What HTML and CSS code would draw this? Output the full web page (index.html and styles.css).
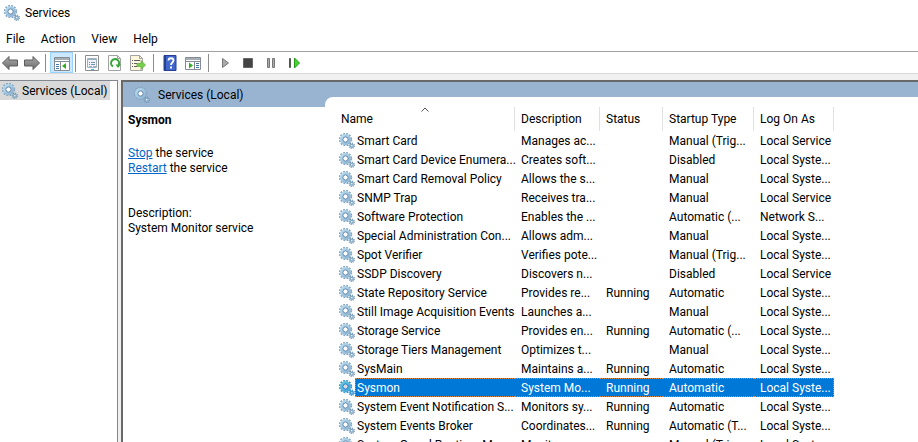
FILE: index.html
```html
<!DOCTYPE html>
<html lang="en">
<head>
<meta charset="utf-8">
<title>Services</title>
<link rel="stylesheet" href="styles.css">
</head>
<body>
<svg class="defs" aria-hidden="true">
  <defs>
    <linearGradient id="metal" x1="0" y1="0" x2="1" y2="1"><stop offset="0" stop-color="#b5daee"/><stop offset="1" stop-color="#8fb4d0"/></linearGradient>
    <linearGradient id="grey" x1="0" y1="0" x2="0" y2="1"><stop offset="0" stop-color="#a8a8a8"/><stop offset="1" stop-color="#6e6e6e"/></linearGradient>
  </defs>
  <symbol id="gear" viewBox="0 0 16 16">
    <circle cx="6.500" cy="6.500" r="5.800" fill="none" stroke="#83a6c3" stroke-width="1.800" stroke-dasharray="1.790 1.247"/>
    <circle cx="6.500" cy="6.500" r="4" fill="none" stroke="url(#metal)" stroke-width="3"/>
    <circle cx="6.500" cy="6.500" r="2.600" fill="#fff" stroke="#6487ae" stroke-width="1"/>
    <circle cx="12.800" cy="12.800" r="2.600" fill="none" stroke="#6b90ae" stroke-width="1.200" stroke-dasharray="1.02 1.02"/>
    <circle cx="12.800" cy="12.800" r="1.500" fill="#fff" stroke="#83a9c4" stroke-width="1.400"/>
  </symbol>
</svg>
<header class="titlebar"><svg class="icon"><use href="#gear"/></svg><h1>Services</h1></header>
<nav class="menu"><button>File</button><button>Action</button><button>View</button><button>Help</button></nav>
<div class="toolbar" role="toolbar">
  <div class="history">
    <button aria-label="Back"><svg class="icon" viewBox="0 0 16 16"><path d="M.5 8 7 1.500V5h8.500v6H7v3.500z" fill="url(#grey)" stroke="#5c5c5c"/></svg></button>
    <button aria-label="Forward"><svg class="icon" viewBox="0 0 16 16"><path d="M15.500 8 9 1.500V5H.5v6H9v3.500z" fill="url(#grey)" stroke="#5c5c5c"/></svg></button>
  </div>
  <span class="rule"></span>
  <button class="pressed" aria-label="Show console tree"><svg class="icon" viewBox="0 0 16 16"><path d="M.5 2.500h15v13H.5z" fill="#fff" stroke="#858b92"/><path d="M1 3h14v2H1z" fill="#a5adb5"/><path d="M1 6.500h14M6.500 7v8" stroke="#858b92"/><path d="M2 9.500h3M2 11.500h3M2 13.500h3" stroke="#4577ad"/><path d="M12 8v6l-4-3z" fill="#2fae20"/></svg></button>
  <span class="rule"></span>
  <button aria-label="Properties"><svg class="icon" viewBox="0 0 16 16"><path d="M1.500.5h13v15h-13z" fill="#fff" stroke="#8c8c8c"/><path d="M3.500 3.500h9v9h-9z" fill="#edf3f8" stroke="#9fb0be"/><path d="M4 4.500h8" stroke="#9cafc0"/><path d="M5 7.500h1M5 9.500h1M7 7.500h4M7 9.500h4" stroke="#7893aa"/><path d="M5 11.500h3M9 11.500h3" stroke="#a6b4c0"/><path d="M7 14.500h3" stroke="#36b5e8"/></svg></button>
  <button aria-label="Refresh"><svg class="icon" viewBox="0 0 16 16"><path d="M1.500.5h9l3 3v12h-12z" fill="#fff" stroke="#a3a3a3"/><path d="M10.500.5v3h3" fill="none" stroke="#a3a3a3"/><path d="M6 11.500A4 4 0 1 1 11.600 10" fill="none" stroke="#33a735" stroke-width="2"/><path d="M8.500 9.500h5.500l-3 3.500z" fill="#33a735"/></svg></button>
  <button aria-label="Export list"><svg class="icon" viewBox="0 0 16 16"><path d="M.5.5h9l3 3v12H.5z" fill="#fff6dc" stroke="#a3a3a3"/><path d="M9.500.5v3h3" fill="none" stroke="#a3a3a3"/><path d="M2 5.500h1M2 8.500h1M2 11.500h1M4 5.500h6M4 8.500h3M4 11.500h3" stroke="#5d6067"/><path d="M7 8.500h4v-3l4.500 4.500-4.500 4.500v-3H7z" fill="#76cf4a" stroke="#5aaf37" stroke-width=".7"/></svg></button>
  <span class="rule"></span>
  <button aria-label="Help"><svg class="icon" viewBox="0 0 16 16"><path d="M2 .5h12v15H2z" fill="#4167cb" stroke="#263f91"/><path d="M2 1h2v14H2z" fill="#24418f"/><path d="M6.500 5.500c0-3 5-3 5 0 0 2-2.500 2-2.500 4.500" fill="none" stroke="#fff" stroke-width="1.800"/><path d="M8 11.500h2v2H8z" fill="#fff"/></svg></button>
  <button aria-label="Show action pane"><svg class="icon" viewBox="0 0 16 16"><path d="M.5 2.500h15v12H.5z" fill="#fff" stroke="#858b92"/><path d="M1 3h14v2H1z" fill="#a5adb5"/><path d="M1 6.500h14M9.500 7v7" stroke="#858b92"/><path d="M11 8.500h3M11 10.500h3M11 12.500h3" stroke="#4577ad"/><path d="M4 7.500v6l4-3z" fill="#2fae20"/></svg></button>
  <span class="rule"></span>
  <button aria-label="Start service"><svg class="icon" viewBox="0 0 16 16"><path d="M5.500 3.500v9l6-4.500z" fill="#aaa" stroke="#777"/></svg></button>
  <button aria-label="Stop service"><svg class="icon" viewBox="0 0 16 16"><path d="M3.500 3.500h9v9h-9z" fill="#444" stroke="#666"/></svg></button>
  <button aria-label="Pause service"><svg class="icon" viewBox="0 0 16 16"><path d="M4.500 3.500h2v9h-2zM9.500 3.500h2v9h-2z" fill="#aaa" stroke="#777"/></svg></button>
  <button aria-label="Restart service"><svg class="icon" viewBox="0 0 16 16"><path d="M3.500 3.500h1v9h-1z" fill="#555" stroke="#555"/><path d="M8.500 3v10l5-5z" fill="#45d332" stroke="#249b19"/></svg></button>
</div>
<main class="workspace">
  <aside class="tree"><button class="node"><svg class="icon"><use href="#gear"/></svg><span>Services (Local)</span></button></aside>
  <section class="console">
    <div class="band"><svg class="icon"><use href="#gear"/></svg><h2>Services (Local)</h2></div>
    <div class="content">
      <div class="details">
        <h3>Sysmon</h3>
        <p><a href="#stop">Stop</a> the service<br><a href="#restart">Restart</a> the service</p>
        <p class="description">Description:<br>System Monitor service</p>
      </div>
      <div class="sheet">
        <table>
          <colgroup><col class="c-name"><col class="c-desc"><col class="c-status"><col class="c-start"><col class="c-logon"></colgroup>
          <thead><tr><th><span>Name</span><svg class="sort" viewBox="0 0 8 5"><path d="M.5 4.500 4 1l3.500 3.500" fill="none" stroke="#555"/></svg></th><th><span>Description</span></th><th><span>Status</span></th><th><span>Startup Type</span></th><th><span>Log On As</span></th></tr></thead>
          <tbody id="rows"></tbody>
        </table>
      </div>
    </div>
  </section>
</main>
<script src="app.js"></script>
</body>
</html>
```
FILE: app.js
```js
const services = [
  ["Smart Card", "Manages ac...", "", "Manual (Trig...", "Local Service"],
  ["Smart Card Device Enumera...", "Creates soft...", "", "Disabled", "Local Syste..."],
  ["Smart Card Removal Policy", "Allows the s...", "", "Manual", "Local Syste..."],
  ["SNMP Trap", "Receives tra...", "", "Manual", "Local Service"],
  ["Software Protection", "Enables the ...", "", "Automatic (...", "Network S..."],
  ["Special Administration Con...", "Allows adm...", "", "Manual", "Local Syste..."],
  ["Spot Verifier", "Verifies pote...", "", "Manual (Trig...", "Local Syste..."],
  ["SSDP Discovery", "Discovers n...", "", "Disabled", "Local Service"],
  ["State Repository Service", "Provides re...", "Running", "Automatic", "Local Syste..."],
  ["Still Image Acquisition Events", "Launches a...", "", "Manual", "Local Syste..."],
  ["Storage Service", "Provides en...", "Running", "Automatic (...", "Local Syste..."],
  ["Storage Tiers Management", "Optimizes t...", "", "Manual", "Local Syste..."],
  ["SysMain", "Maintains a...", "Running", "Automatic", "Local Syste..."],
  ["Sysmon", "System Mo...", "Running", "Automatic", "Local Syste..."],
  ["System Event Notification S...", "Monitors sy...", "Running", "Automatic", "Local Syste..."],
  ["System Events Broker", "Coordinates...", "Running", "Automatic (T...", "Local Syste..."],
  ["System Guard Runtime Mo...", "Monitors an...", "", "Manual (Trig...", "Local Syste..."]
];
const gear = '<svg class="icon"><use href="#gear"/></svg>';
document.getElementById("rows").innerHTML = services.map(([name, ...rest]) =>
  `<tr${name === "Sysmon" ? ' class="selected"' : ""}><td><div class="name">${gear}<span>${name}</span></div></td>${rest.map(v => `<td>${v}</td>`).join("")}</tr>`
).join("");
```
FILE: styles.css
```css
* { box-sizing: border-box; }
body { margin: 0; height: 100vh; display: flex; flex-direction: column; overflow: hidden; background: #f0f0f0; color: #000; font: 12px/15px Roboto, "Open Sans", sans-serif; }
h1, h2, h3, p { margin: 0; font-size: 12px; font-weight: 400; }
button { border: 0; padding: 0; background: none; color: inherit; font: inherit; }
.defs { position: absolute; width: 0; height: 0; }
.icon { display: block; flex: none; width: 16px; height: 16px; }
.titlebar { flex: none; display: flex; align-items: center; gap: 5px; height: 26px; padding-left: 4px; background: #fff; }
.menu { flex: none; display: flex; gap: 16px; height: 26px; padding: 2px 0 0 6px; background: #fff; border-bottom: 1px solid #a0a0a0; }
.toolbar { flex: none; display: flex; align-items: center; height: 22px; background: #fff; border-bottom: 1px solid #d9d9d9; }
.toolbar button { display: grid; place-items: center; width: 23px; height: 21px; }
.history { display: flex; gap: 3px; }
.toolbar .history button { width: 19px; }
.toolbar .pressed { background: #cce8ff; border: 1px solid #99d1ff; }
.rule { width: 1px; height: 18px; margin: 0 4px; background: #8c8c8c; }
.pressed + .rule { margin-left: 2px; }
.workspace { flex: 1; min-height: 0; display: flex; gap: 3px; padding-top: 6px; }
.tree { width: 118px; background: #fff; border: solid #828790; border-width: 1px 1px 0 0; }
.node { display: flex; align-items: center; gap: 4px; height: 19px; padding: 0 2px 0 2px; background: #d9d9d9; }
.node span, h2 { padding-top: 2px; }
.console { flex: 1; min-width: 0; display: flex; flex-direction: column; border: solid #696969; border-width: 2px 0 0 2px; background: #fff; }
.band { flex: none; display: flex; align-items: center; gap: 8px; height: 25px; padding-left: 11px; background: #99b4d1; }
.content { flex: 1; min-height: 0; display: flex; }
.details { width: 202px; padding: 6px 5px; }
h3 { font-weight: 700; margin-bottom: 18px; }
.description { margin-top: 30px; }
a { color: #0066cc; }
.sheet { flex: 1; min-width: 0; margin-top: -10px; padding-left: 10px; background: #fff; border-top-left-radius: 8px; }
table { table-layout: fixed; width: 499px; border-collapse: separate; border-spacing: 0; }
.c-name { width: 180px; }
.c-desc { width: 85px; }
.c-status { width: 63px; }
.c-start { width: 91px; }
.c-logon { width: 80px; }
th { position: relative; height: 34px; padding: 10px 0 0; font-weight: 400; text-align: left; vertical-align: top; }
th span { display: block; height: 24px; padding: 5px 0 0 6px; border-right: 1px solid #e0e0e0; }
.sort { position: absolute; top: 10px; left: 86px; width: 8px; height: 5px; }
td { height: 19px; padding: 2px 0 0 6px; white-space: nowrap; }
td:first-child { padding: 0 0 0 4px; }
.name { display: flex; align-items: center; }
.name span { flex: 1; height: 19px; padding: 3px 0 0 2px; }
.selected td:not(:first-child), .selected .name span { background: #0078d7; color: #fff; border: dotted #d98a45; border-width: 1px 0; }
.selected td:not(:first-child) { padding-top: 1px; }
.selected .name span { padding: 2px 0 0 1px; border-left-width: 1px; }
.selected td:last-child { border-right-width: 1px; }
.selected .icon { filter: saturate(3) brightness(.85); }
```
